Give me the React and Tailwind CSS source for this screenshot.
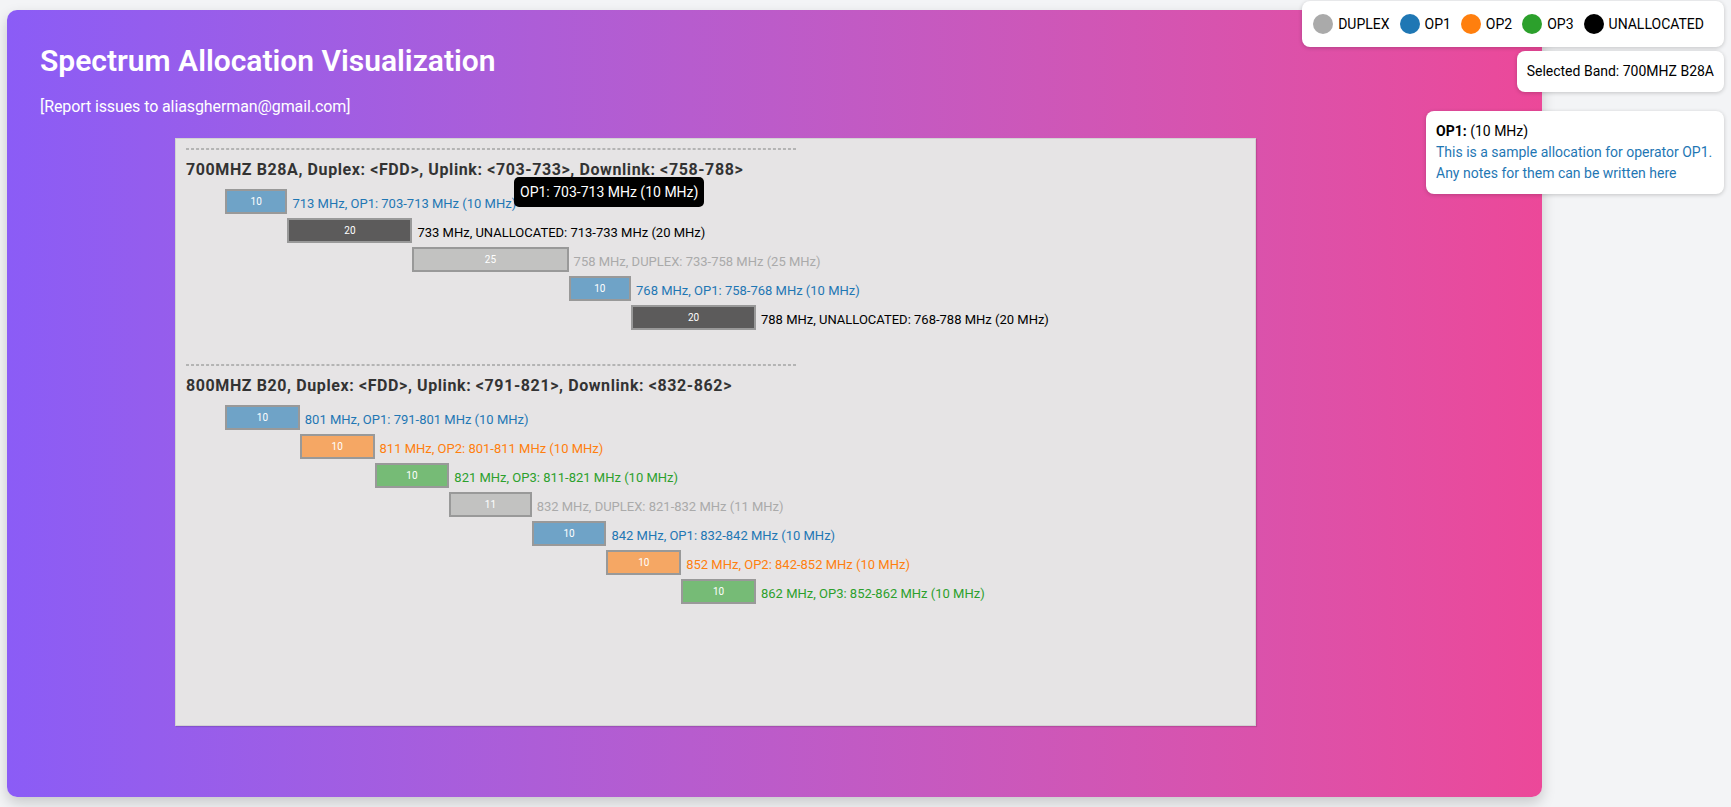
import React from 'react';

const COLORS = {
  DUPLEX: { bar: 'bg-[#c2c2c1]', text: 'text-[#aaaaaa]', dot: 'bg-[#aaaaaa]' },
  OP1: { bar: 'bg-[#6fa3c7]', text: 'text-[#1f77b4]', dot: 'bg-[#1f77b4]' },
  OP2: { bar: 'bg-[#f5a764]', text: 'text-[#ff7f0e]', dot: 'bg-[#ff7f0e]' },
  OP3: { bar: 'bg-[#76bb76]', text: 'text-[#2ca02c]', dot: 'bg-[#2ca02c]' },
  UNALLOCATED: { bar: 'bg-[#5c5b5b]', text: 'text-black', dot: 'bg-black' },
};

const BANDS = [
  {
    name: '700MHZ B28A',
    duplex: 'FDD',
    uplink: '703-733',
    downlink: '758-788',
    start: 703,
    end: 788,
    allocs: [
      ['OP1', 703, 713],
      ['UNALLOCATED', 713, 733],
      ['DUPLEX', 733, 758],
      ['OP1', 758, 768],
      ['UNALLOCATED', 768, 788],
    ],
  },
  {
    name: '800MHZ B20',
    duplex: 'FDD',
    uplink: '791-821',
    downlink: '832-862',
    start: 791,
    end: 862,
    allocs: [
      ['OP1', 791, 801],
      ['OP2', 801, 811],
      ['OP3', 811, 821],
      ['DUPLEX', 821, 832],
      ['OP1', 832, 842],
      ['OP2', 842, 852],
      ['OP3', 852, 862],
    ],
  },
];

const SPAN = 531; // px the whole band is drawn across
const INDENT = 39;

function Band({ band, first }) {
  const scale = SPAN / (band.end - band.start);
  return (
    <div className={first ? '' : 'mt-[34px]'}>
      <hr className="w-[610px] border-y border-dashed border-[#b4b4b4]" />
      <h3 className="mt-[8px] text-[16px] leading-[24px] tracking-[0.6px] font-bold text-[#333]">
        {band.name}, Duplex: &lt;{band.duplex}&gt;, Uplink: &lt;{band.uplink}&gt;, Downlink: &lt;{band.downlink}&gt;
      </h3>
      <div className="mt-[7px] flex flex-col gap-[4px]">
        {band.allocs.map(([op, s, e], i) => {
          const c = COLORS[op];
          return (
            <div key={i} className="flex items-end h-[25px]">
              <div className="shrink-0" style={{ width: INDENT + (s - band.start) * scale }} />
              <div
                className={`shrink-0 h-[25px] border-2 border-[#999] ${c.bar} flex items-center justify-center text-white text-[10px]`}
                style={{ width: (e - s) * scale }}
              >
                {e - s}
              </div>
              <span className={`ml-[5px] whitespace-nowrap text-[13px] leading-[20px] ${c.text}`}>
                {e} MHz, {op}: {s}-{e} MHz ({e - s} MHz)
              </span>
            </div>
          );
        })}
      </div>
    </div>
  );
}

export default function App() {
  return (
    <div className="relative min-h-screen bg-[#f3f4f6] font-['Roboto',sans-serif] pt-[10px] pl-[7px] pb-[10px]">
      <div className="w-[1535px] h-[787px] rounded-[10px] bg-gradient-to-r from-[#8b5cf6] to-[#ec4899] shadow-[0_6px_14px_rgba(0,0,0,0.18)] pt-[32px] pl-[33px]">
        <h1 className="text-[30px] leading-[38px] font-semibold text-white">Spectrum Allocation Visualization</h1>
        <p className="mt-[15px] text-[16px] leading-[24px] tracking-[-0.1px] text-white">[Report issues to aliasgherman@gmail.com]</p>

        <div className="relative mt-[19px] ml-[135px] w-[1081px] h-[588px] bg-[#e6e4e5] border border-[#d2d2d2] shadow-[1px_1px_1px_rgba(0,0,0,0.12)] pt-[9px] pl-[10px]">
          {BANDS.map((b, i) => (
            <Band key={b.name} band={b} first={i === 0} />
          ))}

          <div className="absolute left-[338px] top-[38px] h-[30px] px-[6px] flex items-center rounded-[5px] bg-black text-white text-[14px] whitespace-nowrap">
            OP1: 703-713 MHz (10 MHz)
          </div>
        </div>
      </div>

      {/* floating side cards */}
      <div className="absolute top-[1px] right-[7px] flex flex-col items-end text-[14px] text-black">
        <div className="h-[46px] flex items-center pl-[11px] pr-[10px] bg-white rounded-[8px] shadow-[0_1px_4px_rgba(0,0,0,0.2)]">
          {['DUPLEX', 'OP1', 'OP2', 'OP3', 'UNALLOCATED'].map(k => (
            <div key={k} className="flex items-center mr-[10px]">
              <span className={`w-[20px] h-[20px] rounded-full ${COLORS[k].dot}`} />
              <span className="ml-[5px]">{k}</span>
            </div>
          ))}
        </div>
        <div className="mt-[4px] px-[10px] py-[10px] leading-[21px] bg-white rounded-[8px] shadow-[0_1px_4px_rgba(0,0,0,0.2)]">
          Selected Band: 700MHZ B28A
        </div>
        <div className="mt-[19px] w-[298px] px-[10px] py-[10px] leading-[21px] bg-white rounded-[8px] shadow-[0_1px_4px_rgba(0,0,0,0.2)]">
          <div>
            <b>OP1:</b> (10 MHz)
          </div>
          <div className="text-[#1f77b4]">This is a sample allocation for operator OP1. Any notes for them can be written here</div>
        </div>
      </div>
    </div>
  );
}
